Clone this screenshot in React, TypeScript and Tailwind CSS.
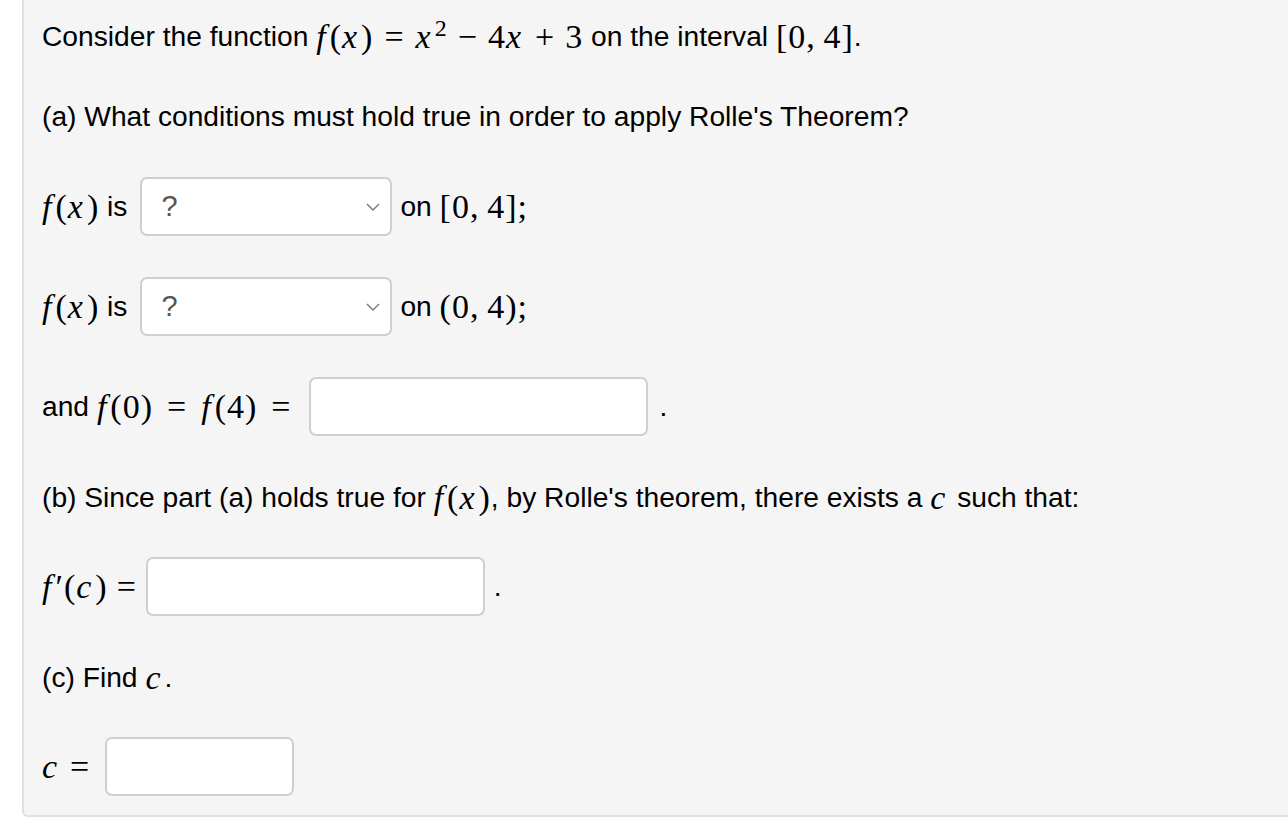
import React from 'react';

// math pieces: serif stands in for the MathJax font
const Math = ({ children }: { children: React.ReactNode }) => (
  <span className="font-['Liberation_Serif',serif] text-[34px] tracking-[1px] whitespace-nowrap">{children}</span>
);
const I = ({ children }: { children: React.ReactNode }) => <i className="italic pr-[3px]">{children}</i>;
const Rel = ({ children }: { children: React.ReactNode }) => <span className="mx-[9px]">{children}</span>;
const Bin = ({ children }: { children: React.ReactNode }) => <span className="mx-[10px]">{children}</span>;

const Fx = () => (
  <Math>
    <I>f</I>(<I>x</I>)
  </Math>
);

const Select = () => (
  <div className="flex items-center justify-between w-[252px] h-[59px] bg-white border-2 border-[#cfcfcf] rounded-[7px] pl-[19px] pr-[9px] ml-[13px] mr-[8px]">
    <span className="text-[29px] text-[#555]">?</span>
    <svg width="16" height="10" viewBox="0 0 16 10" fill="none">
      <path d="M2 2 L8 8 L14 2" stroke="#777" strokeWidth="1.4" />
    </svg>
  </div>
);

const Input = ({ w }: { w: string }) => (
  <div className={`${w} h-[59px] bg-white border-2 border-[#cfcfcf] rounded-[7px]`} />
);

export default function App() {
  return (
    <div className="w-[1288px] h-[836px] bg-white text-black font-['Liberation_Sans',Arial,sans-serif] text-[28.2px] overflow-hidden">
      <div className="ml-[22px] bg-[#f5f5f5] border-l-2 border-b-2 border-[#e0e0e0] rounded-bl-[6px] pl-[18px] pt-[16px] pb-[19px]">
        <div className="h-[40px] flex items-center whitespace-nowrap">
          <span>Consider the function&nbsp;</span>
          <Math>
            <I>f</I>(<I>x</I>)<span className="mx-[11px]">=</span><I>x</I><sup className="text-[24px]">2</sup>
            <Bin>−</Bin>4<I>x</I>
            <Bin>+</Bin>3
          </Math>
          <span>&nbsp;on the interval&nbsp;</span>
          <Math>[0,&thinsp;4]</Math>
          <span>.</span>
        </div>

        <div className="h-[40px] mt-[40px] flex items-center">
          (a) What conditions must hold true in order to apply Rolle's Theorem?
        </div>

        <div className="h-[59px] mt-[41px] flex items-center">
          <Fx />
          <span>&nbsp;is</span>
          <Select />
          <span>on&nbsp;</span>
          <Math>[0,&thinsp;4];</Math>
        </div>

        <div className="h-[59px] mt-[41px] flex items-center">
          <Fx />
          <span>&nbsp;is</span>
          <Select />
          <span>on&nbsp;</span>
          <Math>(0,&thinsp;4);</Math>
        </div>

        <div className="h-[59px] mt-[41px] flex items-center">
          <span>and&nbsp;</span>
          <Math>
            <I>f</I>(0)<span className="mx-[14px]">=</span><I>f</I>(4)<span className="mx-[14px]">=</span>
          </Math>
          <span className="ml-[4px]" />
          <Input w="w-[339px]" />
          <span className="ml-[11px]">.</span>
        </div>

        <div className="h-[40px] mt-[41px] flex items-center whitespace-nowrap">
          <span>(b) Since part (a) holds true for&nbsp;</span>
          <Fx />
          <span>, by Rolle's theorem, there exists a&nbsp;</span>
          <Math>
            <I>c</I>
          </Math>
          <span>&nbsp;such that:</span>
        </div>

        <div className="h-[59px] mt-[40px] flex items-center">
          <Math>
            <I>f</I>′(<I>c</I>)<Rel>=</Rel>
          </Math>
          <Input w="w-[339px]" />
          <span className="ml-[9px]">.</span>
        </div>

        <div className="h-[40px] mt-[41px] flex items-center">
          <span>(c) Find&nbsp;</span>
          <Math>
            <I>c</I>
          </Math>
          <span>.</span>
        </div>

        <div className="h-[59px] mt-[40px] flex items-center">
          <Math>
            <I>c</I>
            <Rel>=</Rel>
          </Math>
          <span className="ml-[6px]" />
          <Input w="w-[189px]" />
        </div>
      </div>
    </div>
  );
}
